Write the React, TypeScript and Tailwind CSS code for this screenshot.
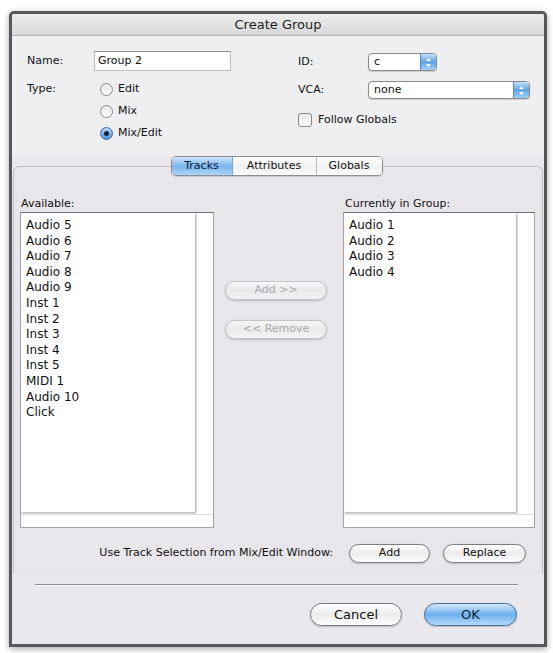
import React from 'react';

const available = ['Audio 5', 'Audio 6', 'Audio 7', 'Audio 8', 'Audio 9', 'Inst 1', 'Inst 2', 'Inst 3', 'Inst 4', 'Inst 5', 'MIDI 1', 'Audio 10', 'Click'];
const inGroup = ['Audio 1', 'Audio 2', 'Audio 3', 'Audio 4'];

function Stepper() {
  return (
    <span className="w-[16px] flex items-center justify-center border-l border-[#5a86b8] bg-gradient-to-b from-[#c4e0fb] via-[#5da2e6] to-[#a6d0f7]">
      <svg width="7" height="11" viewBox="0 0 7 11">
        <path d="M3.5 1 L6 4 L1 4 Z" fill="#fff" />
        <path d="M3.5 10 L6 7 L1 7 Z" fill="#fff" />
      </svg>
    </span>
  );
}

function PopUp({ value, width }: { value: string; width: string }) {
  return (
    <div className={`flex h-[18px] ${width} rounded-[4px] border border-[#8a8a8a] bg-white overflow-hidden shadow-[0_1px_1px_rgba(0,0,0,0.15)]`}>
      <span className="flex-1 pl-[5px] text-[11px] leading-[16px] text-[#111]">{value}</span>
      <Stepper />
    </div>
  );
}

function Radio({ on, label }: { on?: boolean; label: string }) {
  return (
    <div className="flex items-center h-[22px]">
      {on ? (
        <span className="w-[13px] h-[13px] rounded-full border border-[#3d6c9e] bg-gradient-to-b from-[#b6d8f8] to-[#4b94de] flex items-center justify-center">
          <span className="w-[5px] h-[5px] rounded-full bg-[#17283c]" />
        </span>
      ) : (
        <span className="w-[13px] h-[13px] rounded-full border border-[#8c8c8c] bg-gradient-to-b from-[#e6e6e6] to-white" />
      )}
      <span className="ml-[5px] text-[11px] text-[#111]">{label}</span>
    </div>
  );
}

function PillButton({ label, width, disabled, primary, big }: { label: string; width: string; disabled?: boolean; primary?: boolean; big?: boolean }) {
  let look = 'border-[#7c7c7c] bg-gradient-to-b from-white via-[#ececec] to-white text-[#111]';
  if (disabled) look = 'border-[#c4c4c8] bg-gradient-to-b from-[#f6f6f6] via-[#eaeaea] to-[#f4f4f4] text-[#a9a9ad]';
  if (primary) look = 'border-[#41709f] bg-gradient-to-b from-[#d2e8fc] via-[#6cb0ee] to-[#b4dafb] text-[#0d1b2c]';
  return (
    <div
      className={`${width} ${big ? 'h-[23px] text-[13px]' : 'h-[19px] text-[11px]'} flex items-center justify-center rounded-full border shadow-[0_1px_2px_rgba(0,0,0,0.2)] ${look}`}
    >
      {label}
    </div>
  );
}

function TrackList({ items }: { items: string[] }) {
  return (
    <div className="flex flex-col h-[316px] border border-[#a4a4a8] border-t-[#727276] bg-[#f7f7f8]">
      <div className="flex flex-1">
        <div className="flex-1 mb-[2px] bg-white shadow-[1px_1px_2px_rgba(0,0,0,0.35)] pt-[5px] pl-[5px] text-[12px] leading-[15.6px] text-[#111]">
          {items.map((t) => (
            <div key={t}>{t}</div>
          ))}
        </div>
        <div className="w-[16px] ml-[2px] bg-white" />
      </div>
      <div className="h-[13px] bg-white border-t border-[#dcdce0]" />
    </div>
  );
}

export default function App() {
  return (
    <div className="w-[553px] h-[653px] bg-white pt-[11px] pl-[9px] font-['DejaVu_Sans',sans-serif]">
      <div className="w-[538px] h-[636px] flex flex-col border-[3px] border-[#58585c] rounded-t-[5px] bg-[#eae8ec] shadow-[0_2px_6px_rgba(0,0,0,0.35)] overflow-hidden">
        {/* title bar */}
        <div className="h-[22px] flex items-center justify-center border-b border-[#b4b4b8] bg-gradient-to-b from-[#ededed] to-[#d8d8da] text-[13px] text-[#1e1e1e]">
          Create Group
        </div>

        {/* top form */}
        <div className="h-[120px] flex bg-[#efeef1]">
          <div className="w-[286px] pl-[15px] pt-[15px]">
            <div className="flex items-center h-[20px]">
              <span className="w-[67px] text-[11px] text-[#111]">Name:</span>
              <div className="w-[137px] h-[20px] border border-[#bdbdc0] border-t-[#8e8e92] bg-white pl-[3px] text-[11px] leading-[18px] text-[#111]">
                Group 2
              </div>
            </div>
            <div className="flex mt-[7px]">
              <span className="w-[73px] h-[22px] flex items-center text-[11px] text-[#111]">Type:</span>
              <div className="flex flex-col">
                <Radio label="Edit" />
                <Radio label="Mix" />
                <Radio on label="Mix/Edit" />
              </div>
            </div>
          </div>
          <div className="flex-1 pt-[17px]">
            <div className="flex items-center h-[18px]">
              <span className="w-[70px] text-[11px] text-[#111]">ID:</span>
              <PopUp value="c" width="w-[69px]" />
            </div>
            <div className="flex items-center h-[18px] mt-[10px]">
              <span className="w-[70px] text-[11px] text-[#111]">VCA:</span>
              <PopUp value="none" width="w-[162px]" />
            </div>
            <div className="flex items-center h-[14px] mt-[14px]">
              <span className="w-[14px] h-[14px] rounded-[3px] border border-[#8a8a8e] bg-gradient-to-b from-[#e8e8e8] to-white" />
              <span className="ml-[6px] text-[11px] text-[#111]">Follow Globals</span>
            </div>
          </div>
        </div>

        {/* tabs */}
        <div className="relative z-10 flex justify-center h-[20px]">
          <div className="flex h-[20px] ml-[-3px] rounded-[5px] border border-[#8e8e92] overflow-hidden text-[11px] shadow-[0_1px_1px_rgba(0,0,0,0.15)]">
            <div className="w-[60px] flex items-center justify-center bg-gradient-to-b from-[#d0e6fb] via-[#78b5ee] to-[#aed5f8] text-[#0e1d33]">Tracks</div>
            <div className="w-[84px] flex items-center justify-center border-l border-[#7fa7cf] bg-gradient-to-b from-white via-[#f1f1f3] to-[#fbfbfb] text-[#111]">Attributes</div>
            <div className="w-[66px] flex items-center justify-center border-l border-[#bdbdc0] bg-gradient-to-b from-white via-[#f1f1f3] to-[#fbfbfb] text-[#111]">Globals</div>
          </div>
        </div>

        {/* tab panel */}
        <div className="mt-[-10px] mx-[1px] h-[408px] rounded-t-[6px] border border-[#c0bec4] border-b-transparent bg-[#e8e6ea] pt-[30px] pl-[6px] pr-[7px]">
          <div className="flex">
            <div className="w-[194px]">
              <div className="h-[15px] pl-[1px] text-[11px] leading-[14px] text-[#111]">Available:</div>
              <TrackList items={available} />
            </div>
            <div className="w-[129px] pl-[11px] pt-[84px]">
              <PillButton label="Add >>" width="w-[102px]" disabled />
              <div className="h-[20px]" />
              <PillButton label="<< Remove" width="w-[102px]" disabled />
            </div>
            <div className="w-[192px]">
              <div className="h-[15px] pl-[2px] text-[11px] leading-[14px] text-[#111]">Currently in Group:</div>
              <TrackList items={inGroup} />
            </div>
          </div>
          <div className="flex items-center justify-end mt-[15px] h-[20px] pr-[9px]">
            <span className="text-[11px] text-[#111]">Use Track Selection from Mix/Edit Window:</span>
            <div className="ml-[16px]">
              <PillButton label="Add" width="w-[81px]" />
            </div>
            <div className="ml-[13px]">
              <PillButton label="Replace" width="w-[83px]" />
            </div>
          </div>
        </div>

        {/* separator */}
        <div className="mt-[10px] ml-[23px] mr-[26px] h-[2px] border-t border-[#8e8e92] bg-[#f8f8fa]" />

        {/* dialog buttons */}
        <div className="flex justify-end mt-[17px] pr-[27px]">
          <PillButton label="Cancel" width="w-[92px]" big />
          <div className="ml-[22px]">
            <PillButton label="OK" width="w-[93px]" primary big />
          </div>
        </div>
      </div>
    </div>
  );
}
